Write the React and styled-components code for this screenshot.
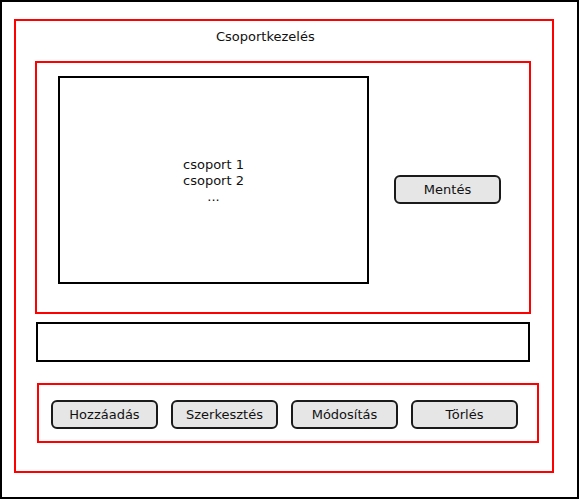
import styled, { createGlobalStyle } from 'styled-components';

const GlobalStyle = createGlobalStyle`
  body {
    margin: 0;
    font-family: "DejaVu Sans", sans-serif;
    font-size: 13px;
    color: #111;
    background: #fff;
  }
  * { box-sizing: border-box; }
`;

const groups = ['csoport 1', 'csoport 2', '...'];
const actions = ['Hozzáadás', 'Szerkesztés', 'Módosítás', 'Törlés'];

const App = () => {
  return (
    <>
      <GlobalStyle />
      <Frame>
        <Panel>
          <Title>Csoportkezelés</Title>
          <ListSection>
            <GroupList>
              {groups.map((g) => (
                <GroupItem key={g}>{g}</GroupItem>
              ))}
            </GroupList>
            <SaveButton>Mentés</SaveButton>
          </ListSection>
          <NameField />
          <ActionBar>
            {actions.map((a) => (
              <Button key={a}>{a}</Button>
            ))}
          </ActionBar>
        </Panel>
      </Frame>
    </>
  );
};

export default App;

const Frame = styled.div`
  width: 579px;
  height: 499px;
  border: 2px solid #000;
  padding: 17px 0 0 12px;
`;

const Panel = styled.div`
  width: 540px;
  height: 454px;
  border: 2px solid #f00;
  padding-top: 8px;
  display: flex;
  flex-direction: column;
`;

const Title = styled.div`
  line-height: 16px;
  height: 16px;
  padding-left: 200px;
  margin-bottom: 16px;
`;

const ListSection = styled.div`
  width: 496px;
  height: 253px;
  margin-left: 19px;
  border: 2px solid #f00;
  padding: 13px 0 0 21px;
  display: flex;
  align-items: flex-start;
  gap: 25px;
`;

const GroupList = styled.div`
  width: 311px;
  height: 208px;
  border: 2px solid #000;
  padding-top: 1px;
  display: flex;
  flex-direction: column;
  justify-content: center;
  align-items: center;
`;

const GroupItem = styled.div`
  line-height: 16px;
`;

const Button = styled.button`
  width: 107px;
  height: 29px;
  border: 2px solid #1a1a1a;
  border-radius: 6px;
  background: #e6e6e6;
  font-family: "DejaVu Sans", sans-serif;
  font-size: 13px;
  color: #111;
  padding: 0;
`;

const SaveButton = styled(Button)`
  margin-top: 99px;
`;

const NameField = styled.div`
  width: 494px;
  height: 40px;
  margin: 8px 0 0 20px;
  border: 2px solid #000;
`;

const ActionBar = styled.div`
  width: 502px;
  height: 60px;
  margin: 21px 0 0 21px;
  border: 2px solid #f00;
  padding: 15px 0 0 12px;
  display: flex;
  align-items: flex-start;
  gap: 13px;
`;
